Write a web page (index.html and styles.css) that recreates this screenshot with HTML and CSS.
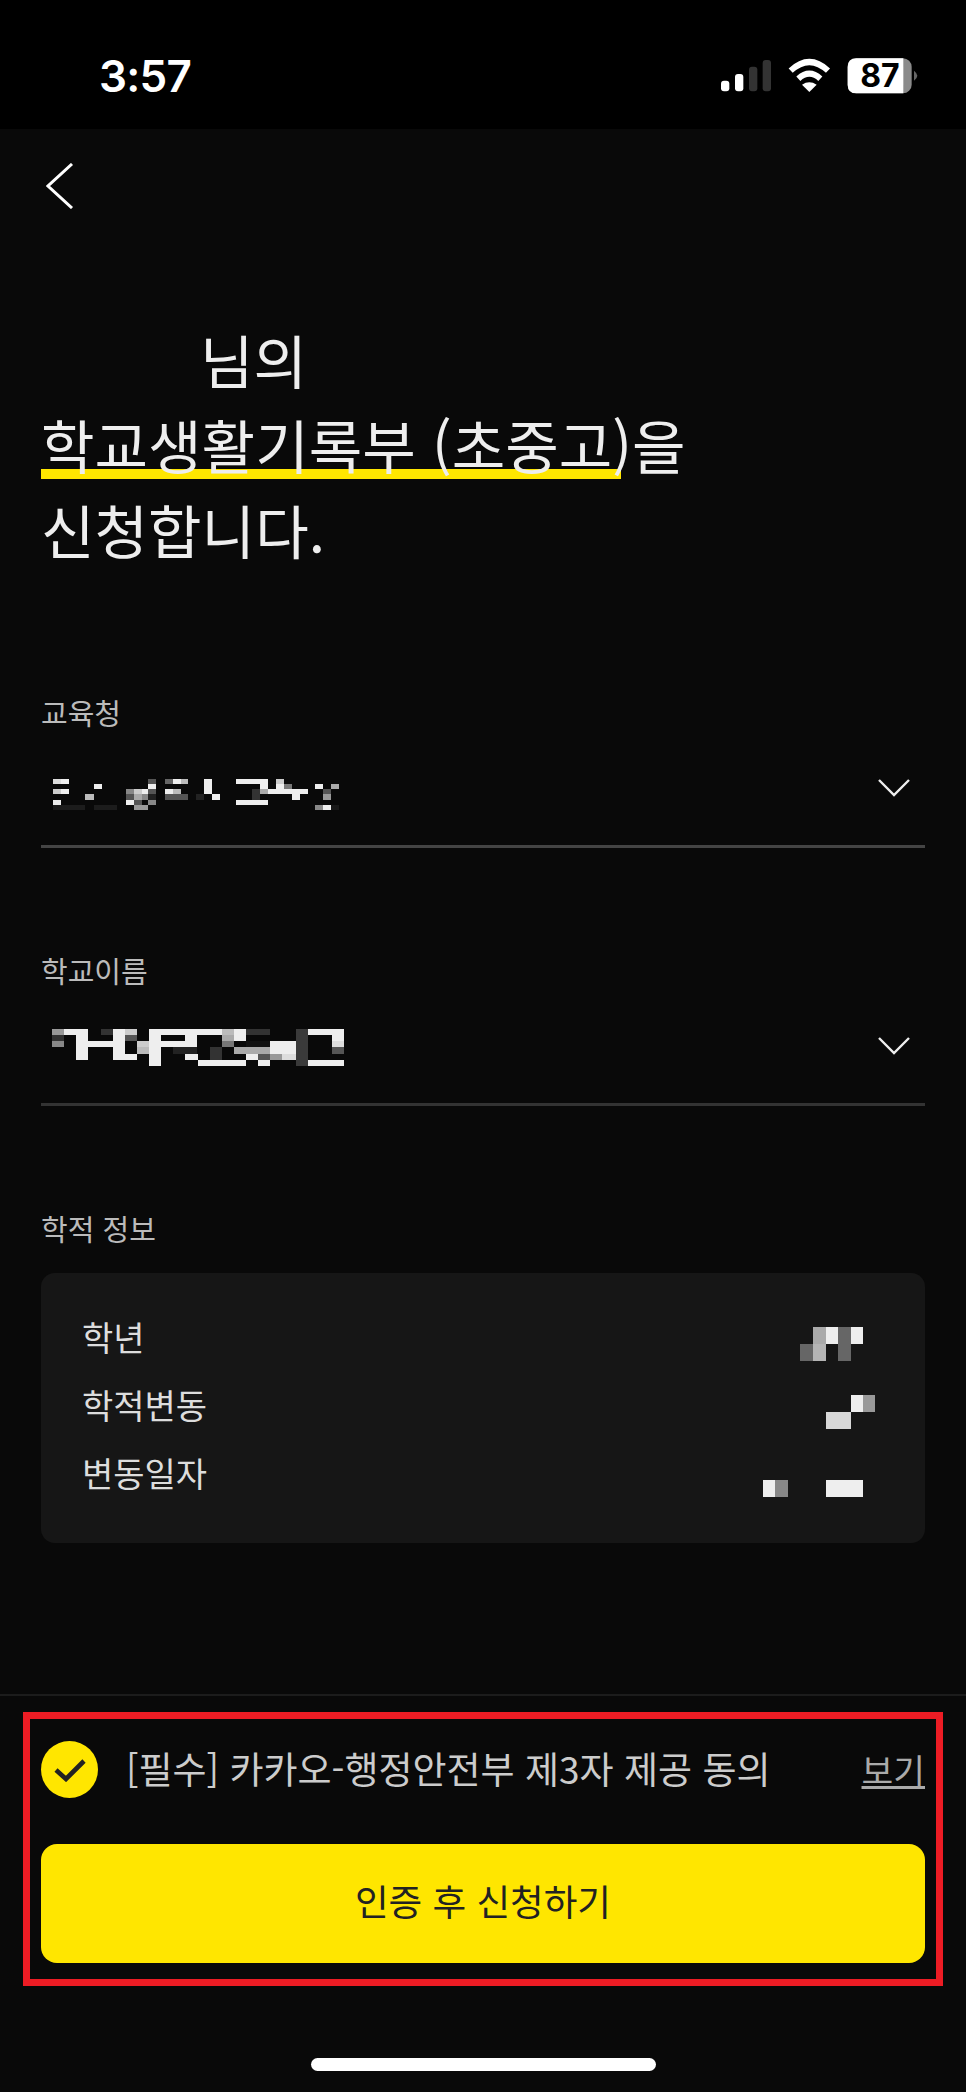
FILE: index.html
```html
<!DOCTYPE html>
<html lang="ko">
<head>
  <meta charset="UTF-8"/>
  <title>학교생활기록부 신청</title>
  <meta name="viewport" content="width=device-width, initial-scale=1.0"/>
  <link rel="stylesheet" href="styles.css">
</head>
<body>

<div class="status-bar">
  <div class="time">3:57</div>
  <svg class="status-icons" viewBox="0 0 660 150">
    <rect x="33" y="92" width="25" height="32" rx="9" fill="#fff"/>
    <rect x="75" y="72" width="25" height="52" rx="9" fill="#fff"/>
    <rect x="117" y="50" width="25" height="74" rx="9" fill="#333"/>
    <rect x="158" y="30" width="25" height="94" rx="9" fill="#333"/>
    <path d="M242 62 Q298 10 354 62" fill="none" stroke="#fff" stroke-width="18"/>
    <path d="M265 86 Q298 56 331 86" fill="none" stroke="#fff" stroke-width="18"/>
    <path d="M276 104 Q298 90 320 104 L298 126 Z" fill="#fff"/>
    <rect x="413" y="25" width="192" height="105" rx="26" fill="#8a8a8a"/>
    <path d="M439 25 H580 V130 H439 Q413 130 413 104 V51 Q413 25 439 25 Z" fill="#fff"/>
    <path d="M612 62 Q622 70 622 77 Q622 84 612 92 Z" fill="#666"/>
    <text class="battery-num" x="510" y="111" text-anchor="middle">87</text>
  </svg>
</div>

<div class="nav">
  <svg class="back" viewBox="0 0 28 46">
    <polyline points="26,1 2,23 26,45" fill="none" stroke="#fff" stroke-width="3"/>
  </svg>
</div>

<h1 class="title">
  <span class="title-name">님의</span><br>
  <span class="mark">학교생활기록부 (초중고)</span>을<br>
  신청합니다.
</h1>

<div class="field">
  <label>교육청</label>
  <div class="field-row">
    <svg class="blur-text" viewBox="0 0 900 150" shape-rendering="crispEdges">
      <rect x="24" y="27" width="24" height="15" fill="#ddd"/><rect x="48" y="27" width="25" height="15" fill="#eee"/>
      <rect x="310" y="27" width="24" height="15" fill="#555"/><rect x="360" y="27" width="23" height="15" fill="#666"/>
      <rect x="383" y="27" width="24" height="15" fill="#eee"/><rect x="407" y="27" width="23" height="15" fill="#bbb"/>
      <rect x="478" y="27" width="24" height="46" fill="#eee"/><rect x="573" y="27" width="97" height="15" fill="#eee"/>
      <rect x="694" y="27" width="24" height="15" fill="#ccc"/>
      <rect x="146" y="42" width="24" height="16" fill="#eee"/><rect x="310" y="42" width="24" height="16" fill="#eee"/>
      <rect x="645" y="42" width="25" height="16" fill="#eee"/><rect x="694" y="42" width="24" height="16" fill="#eee"/>
      <rect x="718" y="42" width="24" height="16" fill="#777"/><rect x="810" y="42" width="24" height="16" fill="#eee"/>
      <rect x="858" y="42" width="25" height="16" fill="#aaa"/>
      <rect x="24" y="58" width="24" height="15" fill="#ccc"/><rect x="48" y="58" width="25" height="15" fill="#eee"/>
      <rect x="243" y="58" width="24" height="15" fill="#888"/><rect x="267" y="58" width="25" height="15" fill="#ccc"/>
      <rect x="292" y="58" width="18" height="15" fill="#eee"/><rect x="310" y="58" width="24" height="15" fill="#555"/>
      <rect x="360" y="58" width="23" height="15" fill="#eee"/><rect x="383" y="58" width="24" height="15" fill="#bbb"/>
      <rect x="621" y="58" width="24" height="31" fill="#333"/><rect x="645" y="58" width="25" height="15" fill="#aaa"/>
      <rect x="670" y="58" width="120" height="15" fill="#eee"/><rect x="834" y="58" width="24" height="15" fill="#555"/>
      <rect x="121" y="73" width="25" height="16" fill="#bbb"/><rect x="243" y="73" width="24" height="16" fill="#555"/>
      <rect x="267" y="73" width="25" height="16" fill="#aaa"/><rect x="292" y="73" width="18" height="16" fill="#888"/>
      <rect x="310" y="73" width="24" height="16" fill="#222"/><rect x="360" y="73" width="70" height="16" fill="#555"/>
      <rect x="454" y="73" width="24" height="16" fill="#222"/><rect x="502" y="73" width="23" height="16" fill="#eee"/>
      <rect x="742" y="73" width="24" height="16" fill="#eee"/><rect x="834" y="73" width="24" height="16" fill="#999"/>
      <rect x="24" y="89" width="24" height="15" fill="#eee"/><rect x="243" y="89" width="24" height="15" fill="#eee"/>
      <rect x="267" y="89" width="25" height="15" fill="#555"/><rect x="310" y="89" width="24" height="15" fill="#888"/>
      <rect x="573" y="89" width="97" height="15" fill="#eee"/>
      <rect x="24" y="104" width="97" height="16" fill="#1c1c1c"/><rect x="146" y="104" width="69" height="16" fill="#1c1c1c"/>
      <rect x="267" y="104" width="43" height="16" fill="#999"/><rect x="810" y="104" width="24" height="16" fill="#888"/>
      <rect x="834" y="104" width="24" height="16" fill="#eee"/><rect x="858" y="104" width="25" height="16" fill="#181818"/>
    </svg>
    <svg class="chevron" viewBox="0 0 32 18">
      <polyline points="1,1 16,16 31,1" fill="none" stroke="#eee" stroke-width="2.4"/>
    </svg>
  </div>
</div>

<div class="field">
  <label>학교이름</label>
  <div class="field-row field-row-dim">
    <svg class="blur-text" viewBox="0 18 900 150" shape-rendering="crispEdges">
      <rect x="22" y="20" width="36" height="18" fill="#999"/><rect x="58" y="20" width="72" height="18" fill="#eee"/>
      <rect x="168" y="20" width="36" height="18" fill="#333"/><rect x="204" y="20" width="36" height="18" fill="#eee"/>
      <rect x="240" y="20" width="36" height="18" fill="#ccc"/><rect x="312" y="20" width="220" height="18" fill="#eee"/>
      <rect x="532" y="20" width="36" height="18" fill="#bbb"/><rect x="568" y="20" width="36" height="37" fill="#eee"/>
      <rect x="604" y="20" width="72" height="18" fill="#333"/><rect x="752" y="20" width="36" height="111" fill="#3a3a3a"/>
      <rect x="788" y="20" width="108" height="18" fill="#eee"/>
      <rect x="22" y="38" width="36" height="19" fill="#333"/><rect x="94" y="38" width="36" height="75" fill="#eee"/>
      <rect x="204" y="38" width="36" height="75" fill="#eee"/><rect x="240" y="38" width="36" height="19" fill="#555"/>
      <rect x="312" y="38" width="36" height="93" fill="#eee"/><rect x="420" y="38" width="36" height="19" fill="#eee"/>
      <rect x="532" y="38" width="36" height="19" fill="#aaa"/><rect x="860" y="38" width="36" height="19" fill="#eee"/>
      <rect x="22" y="57" width="36" height="18" fill="#888"/><rect x="130" y="57" width="74" height="18" fill="#eee"/>
      <rect x="276" y="57" width="36" height="18" fill="#ccc"/><rect x="348" y="57" width="108" height="18" fill="#eee"/>
      <rect x="532" y="57" width="36" height="18" fill="#777"/><rect x="604" y="57" width="72" height="18" fill="#111"/>
      <rect x="676" y="57" width="76" height="38" fill="#eee"/><rect x="860" y="57" width="36" height="18" fill="#ddd"/>
      <rect x="276" y="75" width="36" height="20" fill="#bbb"/><rect x="384" y="75" width="72" height="20" fill="#222"/>
      <rect x="496" y="75" width="36" height="38" fill="#333"/><rect x="568" y="75" width="108" height="20" fill="#aaa"/>
      <rect x="860" y="75" width="36" height="20" fill="#555"/>
      <rect x="240" y="95" width="36" height="18" fill="#eee"/><rect x="420" y="95" width="40" height="18" fill="#eee"/>
      <rect x="604" y="95" width="36" height="18" fill="#eee"/><rect x="640" y="95" width="36" height="18" fill="#555"/>
      <rect x="676" y="95" width="36" height="18" fill="#999"/><rect x="712" y="95" width="40" height="18" fill="#ddd"/>
      <rect x="460" y="113" width="144" height="18" fill="#eee"/><rect x="640" y="113" width="36" height="18" fill="#eee"/>
      <rect x="788" y="113" width="108" height="18" fill="#eee"/>
    </svg>
    <svg class="chevron" viewBox="0 0 32 18">
      <polyline points="1,1 16,16 31,1" fill="none" stroke="#eee" stroke-width="2.4"/>
    </svg>
  </div>
</div>

<div class="field field-plain">
  <label>학적 정보</label>
</div>

<div class="info-card">
  <div class="info-row">
    <span>학년</span>
    <svg class="blur-value" viewBox="65 110 342 103" shape-rendering="crispEdges">
      <rect x="217" y="110" width="39" height="52" fill="#aaa"/><rect x="256" y="110" width="39" height="52" fill="#eee"/>
      <rect x="295" y="110" width="37" height="103" fill="#666"/><rect x="332" y="110" width="37" height="52" fill="#eee"/>
      <rect x="178" y="162" width="39" height="51" fill="#666"/><rect x="217" y="162" width="39" height="51" fill="#b5b5b5"/>
    </svg>
  </div>
  <div class="info-row">
    <span>학적변동</span>
    <svg class="blur-value" viewBox="65 110 342 103" shape-rendering="crispEdges">
      <rect x="332" y="110" width="37" height="52" fill="#eee"/><rect x="369" y="110" width="38" height="52" fill="#999"/>
      <rect x="256" y="162" width="76" height="51" fill="#d8d8d8"/>
    </svg>
  </div>
  <div class="info-row">
    <span>변동일자</span>
    <svg class="blur-value" viewBox="65 110 342 103" shape-rendering="crispEdges">
      <rect x="65" y="162" width="38" height="51" fill="#eee"/><rect x="103" y="162" width="39" height="51" fill="#888"/>
      <rect x="256" y="162" width="113" height="51" fill="#eee"/>
    </svg>
  </div>
</div>

<div class="footer">
  <div class="highlight">
    <div class="agree">
      <div class="check">
        <svg viewBox="0 0 32 24">
          <polyline points="2,12 12,21 30,3" fill="none" stroke="#222" stroke-width="4.6"/>
        </svg>
      </div>
      <div class="agree-text">[필수] 카카오-행정안전부 제3자 제공 동의</div>
      <a class="agree-link">보기</a>
    </div>
    <button class="btn">인증 후 신청하기</button>
  </div>
  <div class="home-bar"></div>
</div>

</body>
</html>
```

FILE: styles.css
```css
:root {
  --yellow: #ffe600;
  --bg: #090909;
}
* {
  margin: 0; padding: 0; box-sizing: border-box;
  font-family: "Noto Sans CJK KR", "Noto Sans", sans-serif;
}
body {
  background: var(--bg);
  color: #fff;
}
.status-bar {
  display: flex;
  justify-content: space-between;
  height: 129px;
  padding: 50px 36px 0 99px;
  background: #000;
}
.time {
  padding-top: 1px;
  font-family: "Inter", sans-serif;
  font-size: 44px;
  font-weight: 600;
  line-height: 50px;
  letter-spacing: -0.7px;
}
.status-icons {
  width: 220px;
  height: 50px;
}
.battery-num {
  font-family: "Inter", sans-serif;
  font-size: 96px;
  font-weight: 700;
  fill: #000;
}
.nav {
  padding: 34px 0 0 46px;
}
.back {
  display: block;
  width: 28px;
  height: 46px;
}
.title {
  margin: 107px 0 121px;
  padding-left: 41px;
  font-size: 58.2px;
  font-weight: 400;
  line-height: 85px;
  color: #eee;
}
.title-name {
  margin-left: 159px;
}
.mark {
  background: linear-gradient(var(--yellow), var(--yellow)) no-repeat 0 68px / calc(100% - 11px) 10px;
}
.field {
  margin: 0 41px 102px;
}
.field label {
  display: block;
  font-size: 29px;
  line-height: 40px;
  color: #bbb;
}
.field-row {
  display: flex;
  justify-content: space-between;
  height: 116px;
  padding: 38px 15px 0 4px;
  border-bottom: 3px solid #444;
}
.field-row-dim {
  border-bottom-color: #333;
}
.blur-text {
  width: 300px;
  height: 50px;
}
.chevron {
  width: 32px;
  height: 18px;
  margin-top: 9px;
}
.field-plain {
  margin-bottom: 25px;
}
.info-card {
  margin: 0 41px;
  height: 270px;
  padding: 32px 49px 0 41px;
  background: #161616;
  border-radius: 14px;
}
.info-row {
  display: flex;
  justify-content: space-between;
  height: 68px;
  font-size: 34px;
  line-height: 63px;
  color: #ddd;
}
.blur-value {
  width: 114px;
  height: 34px;
  margin-top: 22px;
}
.footer {
  margin-top: 151px;
  border-top: 2px solid #1c1c1c;
}
.highlight {
  margin: 16px 23px 0;
  padding: 22px 11px 16px;
  border: 7px solid #ed1c24;
}
.agree {
  display: flex;
  align-items: center;
  margin-bottom: 46px;
}
.check {
  display: flex;
  align-items: center;
  justify-content: center;
  width: 57px;
  height: 57px;
  margin-right: 28px;
  background: var(--yellow);
  border-radius: 50%;
}
.check svg {
  width: 32px;
  height: 24px;
}
.agree-text {
  flex: 1;
  padding-bottom: 4px;
  font-size: 37px;
  line-height: 50px;
  color: #ccc;
}
.agree-link {
  padding-bottom: 2px;
  font-size: 34.5px;
  line-height: 40px;
  color: #aaa;
  text-decoration: underline;
}
.btn {
  display: block;
  width: 100%;
  height: 119px;
  padding-bottom: 6px;
  background: var(--yellow);
  border: none;
  border-radius: 16px;
  font-size: 36.6px;
  color: #222;
}
.home-bar {
  width: 345px;
  height: 13px;
  margin: 72px auto 0;
  background: #fff;
  border-radius: 7px;
}
```
